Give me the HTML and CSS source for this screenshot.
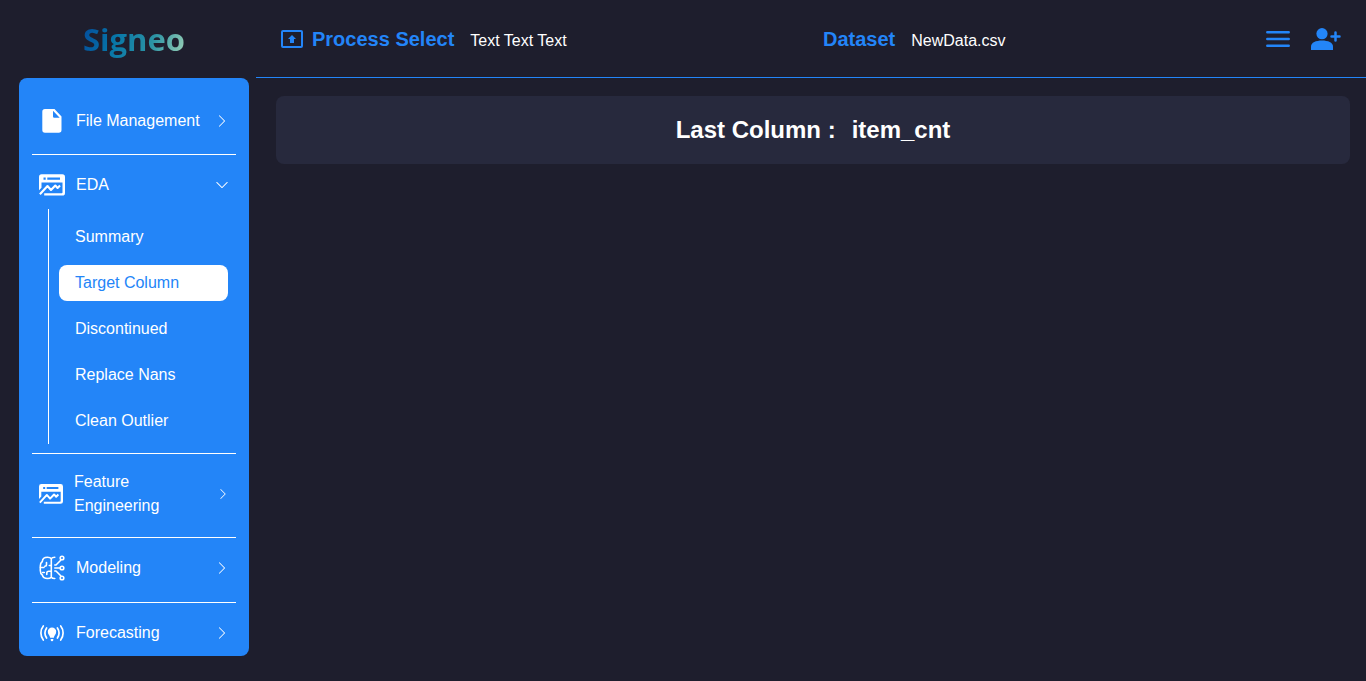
FILE: index.html
```html
<!DOCTYPE html>
<html lang="en">
<head>
<meta charset="utf-8">
<meta name="viewport" content="width=device-width, initial-scale=1">
<title>Signeo</title>
<link rel="stylesheet" href="styles.css">
</head>
<body>
<svg class="sprite" width="0" height="0" aria-hidden="true">
  <symbol id="chevron-right" viewBox="0 0 16 16"><path fill="currentColor" d="M4.646 1.646a.5.5 0 0 1 .708 0l6 6a.5.5 0 0 1 0 .708l-6 6a.5.5 0 0 1-.708-.708L10.293 8 4.646 2.354a.5.5 0 0 1 0-.708z"/></symbol>
  <symbol id="chevron-down" viewBox="0 0 16 16"><path fill="currentColor" d="M1.646 4.646a.5.5 0 0 1 .708 0L8 10.293l5.646-5.647a.5.5 0 0 1 .708.708l-6 6a.5.5 0 0 1-.708 0l-6-6a.5.5 0 0 1 0-.708z"/></symbol>
  <symbol id="chart-window" viewBox="0 0 26 26">
    <path fill="currentColor" fill-rule="evenodd" d="M2.600 2.300h20.800a2.600 2.600 0 0 1 2.600 2.600V21a2.600 2.600 0 0 1-2.600 2.600H5.200V21.300H22.800a.7.7 0 0 0 .7-.7V10.500H2.500V15.800L0 18.300V4.900A2.600 2.600 0 0 1 2.600 2.300zM4.500 5.500v2.200h2.200V5.500zM8.300 5.500v2.200H21V5.500z"/>
    <path fill="none" stroke="currentColor" stroke-width="2.100" stroke-linejoin="round" d="M.9 22.300l7.600-8.300 3.500 4 4.300-4.500 2.300 2.500 2.400-2.400"/>
  </symbol>
</svg>
<div class="layout">
  <aside class="sidebar">
    <a class="logo" href="#">Signeo</a>
    <nav class="panel" aria-label="Main">
      <div class="section section-first">
        <button class="row" type="button">
          <svg class="icon" viewBox="0 0 26 26" aria-hidden="true"><path fill="currentColor" fill-rule="evenodd" d="M6 1h9.500l7 7.500V22a2.700 2.700 0 0 1-2.700 2.700H6A2.700 2.700 0 0 1 3.300 22V3.700A2.700 2.700 0 0 1 6 1zM14 2.800V8.500a1.200 1.200 0 0 0 1.200 1.200h5.500z"/></svg>
          <span class="label">File Management</span>
          <svg class="chevron" aria-hidden="true"><use href="#chevron-right"/></svg>
        </button>
      </div>
      <div class="section section-open">
        <button class="row" type="button" aria-expanded="true">
          <svg class="icon" aria-hidden="true"><use href="#chart-window"/></svg>
          <span class="label">EDA</span>
          <svg class="chevron" aria-hidden="true"><use href="#chevron-down"/></svg>
        </button>
        <div class="submenu">
          <a class="subitem" href="#">Summary</a>
          <a class="subitem active" href="#" aria-current="page">Target Column</a>
          <a class="subitem" href="#">Discontinued</a>
          <a class="subitem" href="#">Replace Nans</a>
          <a class="subitem" href="#">Clean Outlier</a>
        </div>
      </div>
      <div class="section section-tall">
        <button class="row" type="button">
          <svg class="icon" aria-hidden="true"><use href="#chart-window"/></svg>
          <span class="label">Feature Engineering</span>
          <svg class="chevron" aria-hidden="true"><use href="#chevron-right"/></svg>
        </button>
      </div>
      <div class="section">
        <button class="row" type="button">
          <svg class="icon" viewBox="0 0 26 26" aria-hidden="true">
            <g fill="none" stroke="currentColor" stroke-width="1.600" stroke-linecap="round" stroke-linejoin="round">
              <path d="M15.800 2.300C14.300 2.300 13 2.600 12.300 3.600 11.300 2.500 10 2.300 8.500 2.300 5.500 2.300 3.500 4 3.300 6.500 2 7.500 1.300 9 1.300 11v4.500c0 2 .6 3.500 2 4.500.5 2.200 2.500 3.500 5.200 3.500 1.500 0 2.800-.3 3.800-1.300.7 1 2 1.300 3.500 1.300M12.300 3.600v18.600"/>
              <path d="M1.500 12.500h3.500M7.500 7.500v2c0 1-.6 1.700-1.700 1.700M12.300 10.500h-2M7.800 19.500v-1.500c0-1.200.7-1.800 2-1.800h2.500M3.500 17.500h1.800"/>
              <path d="M15.800 10h1.200l4.700-4.700M15.800 13h5M15.800 16h1.200l4.700 4.700"/>
              <circle cx="23" cy="3" r="1.800"/><circle cx="23" cy="13" r="1.800"/><circle cx="23" cy="23" r="1.800"/>
            </g>
          </svg>
          <span class="label">Modeling</span>
          <svg class="chevron" aria-hidden="true"><use href="#chevron-right"/></svg>
        </button>
      </div>
      <div class="section">
        <button class="row" type="button">
          <svg class="icon" viewBox="0 0 26 26" aria-hidden="true">
            <path fill="currentColor" d="M13 7.500a4.200 4.200 0 0 1 4.200 4.200c0 2.600-1.900 3.100-2.400 6.100h-3.600c-.5-3-2.400-3.500-2.400-6.100A4.200 4.200 0 0 1 13 7.500zM11.700 19h2.600v1a1.300 1.300 0 0 1-2.600 0z"/>
            <path fill="none" stroke="currentColor" stroke-width="1.700" stroke-linecap="round" d="M4.300 6c-3.200 4-3.200 10 0 14M7.600 8c-2 3-2 7 0 10M21.700 6c3.200 4 3.200 10 0 14M18.400 8c2 3 2 7 0 10"/>
          </svg>
          <span class="label">Forecasting</span>
          <svg class="chevron" aria-hidden="true"><use href="#chevron-right"/></svg>
        </button>
      </div>
    </nav>
  </aside>
  <div class="content">
    <header class="topbar">
      <div class="group process">
        <svg class="process-icon" viewBox="0 0 22 18" aria-hidden="true"><rect x="1" y="1" width="20" height="16" rx="1" fill="none" stroke="currentColor" stroke-width="2"/><path fill="currentColor" d="M11 5l4 4h-2v4H9V9H7z"/></svg>
        <h2 class="heading">Process Select</h2>
        <span class="value">Text Text Text</span>
      </div>
      <div class="group dataset">
        <h2 class="heading">Dataset</h2>
        <span class="value">NewData.csv</span>
        <div class="actions">
          <button class="icon-button" type="button" aria-label="Menu"><svg width="24" height="18" viewBox="0 0 24 18" aria-hidden="true"><path stroke="currentColor" stroke-width="2.500" stroke-linecap="round" d="M1.300 2.300h21.400M1.300 9h21.400M1.300 15.700h21.400"/></svg></button>
          <button class="icon-button" type="button" aria-label="Add user"><svg width="30" height="24" viewBox="0 0 30 24" aria-hidden="true"><circle cx="11" cy="6.700" r="5.600" fill="currentColor"/><path fill="currentColor" d="M0 23v-3.500c0-4 5-6 11-6s11 2 11 6V23z"/><path stroke="currentColor" stroke-width="2.500" stroke-linecap="round" d="M20.500 9.500h8M24.500 5.500v8"/></svg></button>
        </div>
      </div>
    </header>
    <main class="main">
      <section class="card">
        <h1 class="card-text">Last Column :</h1>
        <span class="card-text">item_cnt</span>
      </section>
    </main>
  </div>
</div>
</body>
</html>
```

FILE: styles.css
```css
* { box-sizing: border-box; }

body {
  margin: 0;
  background: #1e1e2d;
  color: #fff;
  font: 16px/24px "Liberation Sans", Arial, sans-serif;
}

h1, h2 { margin: 0; }
a { color: inherit; text-decoration: none; }

button {
  padding: 0;
  border: 0;
  background: none;
  color: inherit;
  font: inherit;
  text-align: left;
  cursor: pointer;
}

.sprite { position: absolute; }

.layout { display: flex; height: 100vh; }

.sidebar {
  display: flex;
  flex-direction: column;
  flex: 0 0 256px;
  padding: 0 7px 25px 19px;
}

.logo {
  flex: 0 0 78px;
  align-self: center;
  font: bold 31px/78px "Open Sans", "Noto Sans", sans-serif;
  background: linear-gradient(110deg, #03499b 5%, #0776a8 35%, #2b93a4 65%, #b5dfba 100%);
  background-clip: text;
  -webkit-background-clip: text;
  color: transparent;
}

.panel {
  flex: 1;
  min-height: 0;
  overflow: hidden;
  padding: 0 13px;
  border-radius: 8px;
  background: #2385f8;
}

.section { padding: 7px 0 11px; }
.section + .section { border-top: 1px solid #fff; }
.section-first { padding: 20px 0 10px; }
.section-open { padding-bottom: 9px; }
.section-tall { padding-bottom: 10px; }

.row {
  display: flex;
  align-items: center;
  width: 100%;
  height: 46px;
  padding: 0 7px;
}

.icon { flex: none; width: 26px; height: 26px; }
.label { flex: 1; padding-left: 11px; }
.chevron { flex: none; width: 14px; height: 14px; }

.section-tall .row { height: 66px; }
.section-tall .icon { width: 24px; height: 24px; }
.section-tall .chevron { width: 12px; height: 12px; }

.submenu {
  display: flex;
  flex-direction: column;
  gap: 10px;
  margin: 1px 8px 0 16px;
  padding: 10px 0 5px 10px;
  border-left: 1px solid #fff;
}

.subitem { padding: 6px 16px; border-radius: 8px; }
.active { background: #fff; color: #2385f8; }

.content { flex: 1; min-width: 0; }

.topbar {
  display: flex;
  height: 78px;
  border-bottom: 1px solid #2385f8;
}

.group { display: flex; flex: 0 0 50%; align-items: center; }
.process { padding-left: 25px; }
.dataset { padding: 0 25px 0 12px; }
.process-icon { width: 22px; height: 18px; margin-right: 9px; color: #2385f8; }
.heading { color: #2385f8; font-size: 20px; line-height: 24px; }
.value { padding: 4px 0 0 16px; }
.actions { display: flex; align-items: center; gap: 21px; margin-left: auto; }
.icon-button { display: flex; color: #2385f8; }

.main { padding: 18px 16px 0 20px; }

.card {
  display: flex;
  justify-content: center;
  gap: 16px;
  padding: 20px;
  border-radius: 8px;
  background: #27293d;
}

.card-text { font-size: 24px; line-height: 28px; font-weight: bold; }
```
